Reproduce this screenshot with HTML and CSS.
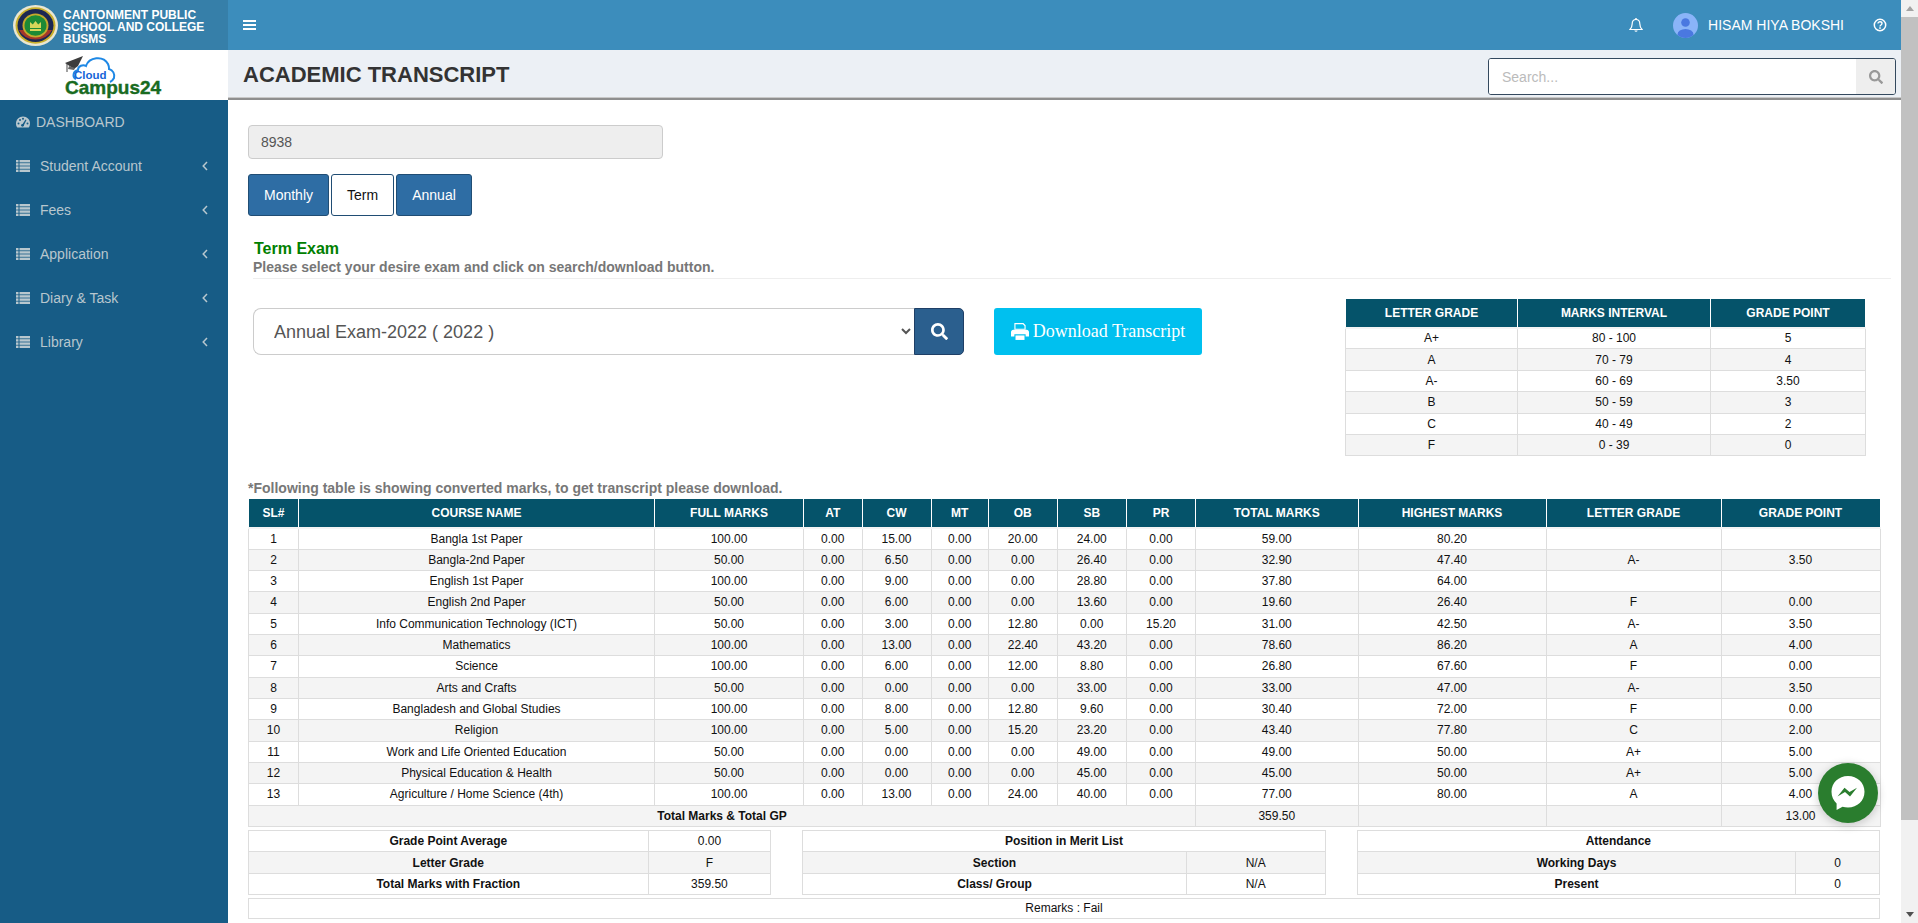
FILE: index.html
```html
<!DOCTYPE html>
<html lang="en">

<head>
    <meta charset="UTF-8">
    <meta name="viewport" content="width=device-width, initial-scale=1.0">
    <title>Academic Transcript</title>
    <link rel="stylesheet" href="styles.css">
</head>

<body>
    <svg class="defs" width="0" height="0">
        <symbol id="iconSearch" viewBox="0 0 512 512">
            <path d="M505 442.7L405.3 343c-4.5-4.5-10.6-7-17-7H372c27.6-35.3 44-79.7 44-128C416 93.1 322.9 0 208 0S0 93.1 0 208s93.1 208 208 208c48.3 0 92.7-16.4 128-44v16.3c0 6.4 2.5 12.5 7 17l99.7 99.7c9.4 9.4 24.6 9.4 33.9 0l28.3-28.3c9.4-9.4 9.4-24.6.1-34zM208 336c-70.7 0-128-57.2-128-128 0-70.7 57.2-128 128-128 70.7 0 128 57.2 128 128 0 70.7-57.2 128-128 128z" fill="currentColor" />
        </symbol>
        <symbol id="iconList" viewBox="0 0 14 12">
            <g fill="currentColor">
                <rect x="0" y="0" width="2.5" height="2.4" />
                <rect x="3.5" y="0" width="10.5" height="2.4" />
                <rect x="0" y="3.2" width="2.5" height="2.4" />
                <rect x="3.5" y="3.2" width="10.5" height="2.4" />
                <rect x="0" y="6.4" width="2.5" height="2.4" />
                <rect x="3.5" y="6.4" width="10.5" height="2.4" />
                <rect x="0" y="9.6" width="2.5" height="2.4" />
                <rect x="3.5" y="9.6" width="10.5" height="2.4" />
            </g>
        </symbol>
        <symbol id="iconAngle" viewBox="0 0 6 10">
            <path d="M5 1L1.2 5 5 9" fill="none" stroke="currentColor" stroke-width="1.5" />
        </symbol>
    </svg>

    <div class="page">
        <header class="topbar">
            <div class="schoolLogo">
                <svg class="crest" viewBox="0 0 45 41">
                    <ellipse cx="22.5" cy="20.5" rx="22.5" ry="20.5" fill="#e9e6d2" />
                    <ellipse cx="22.5" cy="20.5" rx="20" ry="18.2" fill="#c9b02c" />
                    <ellipse cx="22.5" cy="20.5" rx="18" ry="16.4" fill="#1c2752" />
                    <path d="M6 25a18 16 0 0 0 33 0z" fill="#a3362a" />
                    <ellipse cx="22.5" cy="20.5" rx="13" ry="12" fill="#c5a92c" />
                    <ellipse cx="22.5" cy="20.5" rx="11" ry="10.2" fill="#1d8a35" />
                    <path d="M17 23v-6l2.800 2.500 2.700-3.500 2.700 3.500 2.800-2.500v6z" fill="#d8d65a" />
                    <rect x="17" y="24" width="11" height="2" fill="#d8d65a" />
                </svg>
                <p class="schoolName">CANTONMENT PUBLIC<br>SCHOOL AND COLLEGE<br>BUSMS</p>
            </div>
            <div class="navbar">
                <div class="burger"><span></span><span></span><span></span></div>
                <div class="navRight">
                    <svg class="bell" viewBox="0 0 14 15">
                        <path d="M7 1.500c-2.600 0-3.800 2-3.800 4.300 0 2.800-1 4.300-2.200 5.700h12c-1.200-1.400-2.200-2.900-2.200-5.700C10.800 3.500 9.600 1.500 7 1.500z" fill="none" stroke="#fff" stroke-width="1.200" />
                        <path d="M5.300 12.500a1.800 1.800 0 0 0 3.400 0z" fill="#fff" />
                        <circle cx="7" cy="1" r="1" fill="#fff" />
                    </svg>
                    <svg class="avatar" viewBox="0 0 25 25">
                        <defs>
                            <clipPath id="avatarClip">
                                <circle cx="12.500" cy="12.500" r="12.500" />
                            </clipPath>
                        </defs>
                        <circle cx="12.500" cy="12.500" r="12.500" fill="#8ab4f8" />
                        <g clip-path="url(#avatarClip)" fill="#4a78e0">
                            <circle cx="12.500" cy="9.500" r="4.300" />
                            <ellipse cx="12.500" cy="21.500" rx="8" ry="5.500" />
                        </g>
                    </svg>
                    <span class="userName">HISAM HIYA BOKSHI</span>
                    <svg class="help" viewBox="0 0 14 14">
                        <circle cx="7" cy="7" r="5.700" fill="none" stroke="#fff" stroke-width="1.500" />
                        <path d="M5 5.600C5 4.400 6 3.800 7 3.800s2 .6 2 1.700c0 1.500-2 1.500-2 3" fill="none" stroke="#fff" stroke-width="1.400" />
                        <rect x="6.200" y="9.300" width="1.600" height="1.500" fill="#fff" />
                    </svg>
                </div>
            </div>
        </header>

        <div class="below">
            <aside class="sidebar">
                <div class="campusLogo">
                    <svg viewBox="0 0 110 48" width="110" height="48">
                        <path d="M16 27c-4-2-3-8 2-9 0-4 5-6 8-4 3-9 17-11 22-2 1 2 1 4 1 5 4 1 6 5 5 9-1 2-2 3-4 4" fill="none" stroke="#1e88e5" stroke-width="2" />
                        <path d="M5 11L23 4l-5 10-4 3z" fill="#3d3d3d" />
                        <path d="M9 14l6 2-1 2-6-1z" fill="#666" />
                        <path d="M7 12v8" stroke="#444" stroke-width="1" />
                        <text x="14" y="27" class="logoCloud">Cloud</text>
                        <text x="5" y="42" class="logoCampus">Campus24</text>
                    </svg>
                </div>
                <nav class="menu">
                    <a class="menuItem dash">
                        <svg class="menuIcon gauge" viewBox="0 0 14 12">
                            <path d="M7 .5C3.100.5 0 3.600 0 7.500c0 1.600.5 3 1.300 4h11.400c.8-1 1.300-2.400 1.300-4C14 3.600 10.900.5 7 .5z" fill="currentColor" />
                            <g fill="#175c86">
                                <circle cx="2.500" cy="7.500" r="1" />
                                <circle cx="4" cy="4" r="1" />
                                <circle cx="7" cy="2.700" r="1" />
                                <circle cx="11.500" cy="7.500" r="1" />
                                <circle cx="6.500" cy="9.300" r="1.400" />
                                <path d="M6 9l3.500-5.500 1 .5-3 6z" />
                            </g>
                        </svg>
                        <span>DASHBOARD</span>
                    </a>
                    <a class="menuItem">
                        <svg class="menuIcon"><use href="#iconList" /></svg>
                        <span class="menuLabel">Student Account</span>
                        <svg class="angle"><use href="#iconAngle" /></svg>
                    </a>
                    <a class="menuItem">
                        <svg class="menuIcon"><use href="#iconList" /></svg>
                        <span class="menuLabel">Fees</span>
                        <svg class="angle"><use href="#iconAngle" /></svg>
                    </a>
                    <a class="menuItem">
                        <svg class="menuIcon"><use href="#iconList" /></svg>
                        <span class="menuLabel">Application</span>
                        <svg class="angle"><use href="#iconAngle" /></svg>
                    </a>
                    <a class="menuItem">
                        <svg class="menuIcon"><use href="#iconList" /></svg>
                        <span class="menuLabel">Diary &amp; Task</span>
                        <svg class="angle"><use href="#iconAngle" /></svg>
                    </a>
                    <a class="menuItem">
                        <svg class="menuIcon"><use href="#iconList" /></svg>
                        <span class="menuLabel">Library</span>
                        <svg class="angle"><use href="#iconAngle" /></svg>
                    </a>
                </nav>
            </aside>

            <main class="main">
                <div class="titleBar">
                    <h1>ACADEMIC TRANSCRIPT</h1>
                    <div class="searchBox">
                        <input type="text" placeholder="Search...">
                        <button type="button"><svg class="searchIcon"><use href="#iconSearch" /></svg></button>
                    </div>
                </div>

                <div class="content">
                    <input class="studentId" type="text" value="8938" readonly>

                    <div class="tabs">
                        <button type="button" class="tab tabMonthly">Monthly</button>
                        <button type="button" class="tab tabTerm active">Term</button>
                        <button type="button" class="tab tabAnnual">Annual</button>
                    </div>

                    <div class="examHead">
                        <h3>Term Exam</h3>
                        <p>Please select your desire exam and click on search/download button.</p>
                    </div>

                    <div class="examRow">
                        <div class="examForm">
                            <select class="examSelect">
                                <option>Annual Exam-2022 ( 2022 )</option>
                            </select>
                            <button type="button" class="examSearch"><svg class="searchIcon"><use href="#iconSearch" /></svg></button>
                            <button type="button" class="download">
                                <svg class="printIcon" viewBox="0 0 16 15">
                                    <path d="M3 0h8l2 2v4H3zM4 1v4h8V2.500L10.500 1z" fill="#fff" fill-rule="evenodd" />
                                    <path d="M2 6h12c1 0 2 1 2 2v4h-3v-2H3v2H0V8c0-1 1-2 2-2z" fill="#fff" />
                                    <path d="M4 11h8v4H4z" fill="#fff" />
                                </svg>
                                Download Transcript
                            </button>
                        </div>
                        <table class="gradeTable">
                            <colgroup>
                                <col class="g1">
                                <col class="g2">
                                <col class="g3">
                            </colgroup>
                            <thead>
                                <tr><th>LETTER GRADE</th><th>MARKS INTERVAL</th><th>GRADE POINT</th></tr>
                            </thead>
                            <tbody>
                                <tr><td>A+</td><td>80 - 100</td><td>5</td></tr>
                                <tr><td>A</td><td>70 - 79</td><td>4</td></tr>
                                <tr><td>A-</td><td>60 - 69</td><td>3.50</td></tr>
                                <tr><td>B</td><td>50 - 59</td><td>3</td></tr>
                                <tr><td>C</td><td>40 - 49</td><td>2</td></tr>
                                <tr><td>F</td><td>0 - 39</td><td>0</td></tr>
                            </tbody>
                        </table>
                    </div>

                    <p class="note">*Following table is showing converted marks, to get transcript please download.</p>

                    <table class="markTable">
                        <colgroup>
                            <col class="m1">
                            <col class="m2">
                            <col class="m3">
                            <col class="m4">
                            <col class="m5">
                            <col class="m6">
                            <col class="m7">
                            <col class="m8">
                            <col class="m9">
                            <col class="m10">
                            <col class="m11">
                            <col class="m12">
                            <col class="m13">
                        </colgroup>
                        <thead>
                            <tr>
                                <th>SL#</th><th>COURSE NAME</th><th>FULL MARKS</th><th>AT</th><th>CW</th><th>MT</th><th>OB</th><th>SB</th><th>PR</th><th>TOTAL MARKS</th><th>HIGHEST MARKS</th><th>LETTER GRADE</th><th>GRADE POINT</th>
                            </tr>
                        </thead>
                        <tbody>
                            <tr><td>1</td><td>Bangla 1st Paper</td><td>100.00</td><td>0.00</td><td>15.00</td><td>0.00</td><td>20.00</td><td>24.00</td><td>0.00</td><td>59.00</td><td>80.20</td><td></td><td></td></tr>
                            <tr><td>2</td><td>Bangla-2nd Paper</td><td>50.00</td><td>0.00</td><td>6.50</td><td>0.00</td><td>0.00</td><td>26.40</td><td>0.00</td><td>32.90</td><td>47.40</td><td>A-</td><td>3.50</td></tr>
                            <tr><td>3</td><td>English 1st Paper</td><td>100.00</td><td>0.00</td><td>9.00</td><td>0.00</td><td>0.00</td><td>28.80</td><td>0.00</td><td>37.80</td><td>64.00</td><td></td><td></td></tr>
                            <tr><td>4</td><td>English 2nd Paper</td><td>50.00</td><td>0.00</td><td>6.00</td><td>0.00</td><td>0.00</td><td>13.60</td><td>0.00</td><td>19.60</td><td>26.40</td><td>F</td><td>0.00</td></tr>
                            <tr><td>5</td><td>Info Communication Technology (ICT)</td><td>50.00</td><td>0.00</td><td>3.00</td><td>0.00</td><td>12.80</td><td>0.00</td><td>15.20</td><td>31.00</td><td>42.50</td><td>A-</td><td>3.50</td></tr>
                            <tr><td>6</td><td>Mathematics</td><td>100.00</td><td>0.00</td><td>13.00</td><td>0.00</td><td>22.40</td><td>43.20</td><td>0.00</td><td>78.60</td><td>86.20</td><td>A</td><td>4.00</td></tr>
                            <tr><td>7</td><td>Science</td><td>100.00</td><td>0.00</td><td>6.00</td><td>0.00</td><td>12.00</td><td>8.80</td><td>0.00</td><td>26.80</td><td>67.60</td><td>F</td><td>0.00</td></tr>
                            <tr><td>8</td><td>Arts and Crafts</td><td>50.00</td><td>0.00</td><td>0.00</td><td>0.00</td><td>0.00</td><td>33.00</td><td>0.00</td><td>33.00</td><td>47.00</td><td>A-</td><td>3.50</td></tr>
                            <tr><td>9</td><td>Bangladesh and Global Studies</td><td>100.00</td><td>0.00</td><td>8.00</td><td>0.00</td><td>12.80</td><td>9.60</td><td>0.00</td><td>30.40</td><td>72.00</td><td>F</td><td>0.00</td></tr>
                            <tr><td>10</td><td>Religion</td><td>100.00</td><td>0.00</td><td>5.00</td><td>0.00</td><td>15.20</td><td>23.20</td><td>0.00</td><td>43.40</td><td>77.80</td><td>C</td><td>2.00</td></tr>
                            <tr><td>11</td><td>Work and Life Oriented Education</td><td>50.00</td><td>0.00</td><td>0.00</td><td>0.00</td><td>0.00</td><td>49.00</td><td>0.00</td><td>49.00</td><td>50.00</td><td>A+</td><td>5.00</td></tr>
                            <tr><td>12</td><td>Physical Education &amp; Health</td><td>50.00</td><td>0.00</td><td>0.00</td><td>0.00</td><td>0.00</td><td>45.00</td><td>0.00</td><td>45.00</td><td>50.00</td><td>A+</td><td>5.00</td></tr>
                            <tr><td>13</td><td>Agriculture / Home Science (4th)</td><td>100.00</td><td>0.00</td><td>13.00</td><td>0.00</td><td>24.00</td><td>40.00</td><td>0.00</td><td>77.00</td><td>80.00</td><td>A</td><td>4.00</td></tr>
                            <tr><td colspan="9" class="bold">Total Marks &amp; Total GP</td><td>359.50</td><td></td><td></td><td>13.00</td></tr>
                        </tbody>
                    </table>

                    <div class="summary">
                        <table class="sumTable">
                            <colgroup>
                                <col class="labelCol">
                                <col class="valueCol">
                            </colgroup>
                            <tr><td class="bold">Grade Point Average</td><td>0.00</td></tr>
                            <tr><td class="bold">Letter Grade</td><td>F</td></tr>
                            <tr><td class="bold">Total Marks with Fraction</td><td>359.50</td></tr>
                        </table>
                        <table class="sumTable">
                            <colgroup>
                                <col class="labelColMid">
                                <col class="valueColMid">
                            </colgroup>
                            <tr><td colspan="2" class="bold">Position in Merit List</td></tr>
                            <tr><td class="bold">Section</td><td>N/A</td></tr>
                            <tr><td class="bold">Class/ Group</td><td>N/A</td></tr>
                        </table>
                        <table class="sumTable">
                            <colgroup>
                                <col class="labelColEnd">
                                <col class="valueColEnd">
                            </colgroup>
                            <tr><td colspan="2" class="bold">Attendance</td></tr>
                            <tr><td class="bold">Working Days</td><td>0</td></tr>
                            <tr><td class="bold">Present</td><td>0</td></tr>
                        </table>
                    </div>

                    <div class="remarks">Remarks : Fail</div>
                </div>
            </main>
        </div>
    </div>

    <div class="scrollbar">
        <div class="arrowUp"></div>
        <div class="thumb"></div>
        <div class="arrowDown"></div>
    </div>

    <a class="chatBtn">
        <svg viewBox="0 0 36 36" width="36" height="36">
            <path d="M18 1C8.600 1 1.500 7.800 1.500 16.800c0 4.700 1.900 8.800 5.100 11.600v6.600l5.900-3.200c1.700.5 3.500.7 5.500.7 9.400 0 16.500-6.800 16.500-15.700C34.500 7.800 27.400 1 18 1z" fill="#fff" />
            <path d="M7.500 21.500l7-8.800 5 4.400 7.500-4.400-7 8.800-5-4.400z" fill="#2a7d2e" />
        </svg>
    </a>
</body>

</html>
```

FILE: styles.css
```css
* {
    margin: 0;
    padding: 0;
    box-sizing: border-box;
}

body {
    display: flex;
    height: 100vh;
    overflow: hidden;
    font-family: "Liberation Sans", Arial, sans-serif;
    font-size: 14px;
    color: #333;
    background-color: #fff;
}

.defs {
    position: absolute;
}

.page {
    flex: 1;
    display: flex;
    flex-direction: column;
    min-width: 0;
}

/* top bar */
.topbar {
    display: flex;
    height: 50px;
    flex-shrink: 0;
    background-color: #3c8dbc;
    color: #fff;
}

.schoolLogo {
    display: flex;
    align-items: center;
    width: 228px;
    padding-left: 13px;
    background-color: #367fa9;
}

.crest {
    width: 45px;
    height: 41px;
    flex-shrink: 0;
}

.schoolName {
    margin: 3px 0 0 5px;
    font-size: 12px;
    font-weight: bold;
    line-height: 12px;
    white-space: nowrap;
}

.navbar {
    flex: 1;
    display: flex;
    align-items: center;
    justify-content: space-between;
    padding: 0 14px 0 15px;
}

.burger {
    display: flex;
    flex-direction: column;
    gap: 2px;
    width: 13px;
}

.burger span {
    height: 2px;
    background-color: #fff;
}

.navRight {
    display: flex;
    align-items: center;
}

.bell {
    width: 14px;
    height: 15px;
    margin-right: 30px;
}

.avatar {
    width: 25px;
    height: 25px;
    margin-right: 10px;
}

.userName {
    font-size: 14px;
    margin-right: 29px;
}

.help {
    width: 14px;
    height: 14px;
}

/* sidebar */
.below {
    flex: 1;
    display: flex;
    min-height: 0;
}

.sidebar {
    width: 228px;
    flex-shrink: 0;
    background-color: #175c86;
}

.campusLogo {
    display: flex;
    height: 50px;
    background-color: #fff;
    padding: 2px 0 0 60px;
}

.logoCloud {
    font-family: "Liberation Sans", sans-serif;
    font-size: 11.5px;
    font-weight: bold;
    fill: #1565d8;
}

.logoCampus {
    font-family: "Liberation Sans", sans-serif;
    font-size: 19px;
    font-weight: bold;
    fill: #196b1f;
    stroke: #196b1f;
    stroke-width: .4px;
}

.menu {
    padding-top: 0;
}

.menuItem {
    display: flex;
    align-items: center;
    height: 44px;
    padding: 0 20px 0 16px;
    color: #b8c7ce;
    font-size: 14px;
}

.dash {
    font-size: 14px;
}

.menuIcon {
    width: 14px;
    height: 12px;
    flex-shrink: 0;
}

.gauge {
    margin-right: 6px;
}

.menuLabel {
    flex: 1;
    margin-left: 10px;
}

.angle {
    width: 6px;
    height: 10px;
}

/* title bar */
.main {
    flex: 1;
    min-width: 0;
}

.titleBar {
    display: flex;
    align-items: center;
    justify-content: space-between;
    height: 50px;
    padding: 2px 5px 0 15px;
    background-color: #ecf0f5;
    border-bottom: 2px solid #8f8f8f;
    box-shadow: inset 0 -1px 0 #c8c8c8;
}

.titleBar h1 {
    font-size: 22px;
    font-weight: bold;
    color: #333;
}

.searchBox {
    display: flex;
    width: 408px;
    height: 37px;
    margin-top: 3px;
    border: 1px solid #34495e;
    border-radius: 3px;
    background-color: #fff;
    overflow: hidden;
}

.searchBox input {
    flex: 1;
    min-width: 0;
    border: 0;
    outline: 0;
    padding: 0 13px;
    font-family: inherit;
    font-size: 14px;
}

.searchBox input::placeholder {
    color: #bbb;
}

.searchBox button {
    display: flex;
    align-items: center;
    justify-content: center;
    width: 39px;
    border: 0;
    background-color: #eee;
    color: #999;
}

.searchIcon {
    width: 14px;
    height: 14px;
}

/* content */
.content {
    padding: 25px 21px 0 20px;
}

.studentId {
    display: block;
    width: 415px;
    height: 34px;
    padding: 0 12px;
    border: 1px solid #ccc;
    border-radius: 4px;
    background-color: #eee;
    font-family: inherit;
    font-size: 14px;
    color: #555;
    outline: 0;
}

.tabs {
    display: flex;
    gap: 2px;
    margin-top: 15px;
}

.tab {
    height: 42px;
    border: 1px solid #204d74;
    border-radius: 3px;
    background-color: #2e6da4;
    font-family: inherit;
    font-size: 14px;
    color: #fff;
}

.tabMonthly {
    width: 81px;
}

.tabTerm {
    width: 63px;
}

.tabAnnual {
    width: 76px;
}

.tab.active {
    background-color: #fff;
    color: #111;
}

.examHead {
    margin: 24px -11px 0 5px;
    padding-bottom: 1px;
    border-bottom: 1px solid #eee;
}

.examHead h3 {
    padding-left: 1px;
    font-size: 16px;
    font-weight: bold;
    line-height: 18px;
    color: #008000;
}

.examHead p {
    font-size: 14px;
    font-weight: bold;
    line-height: 19px;
    color: #777;
}

.examRow {
    display: flex;
    justify-content: space-between;
    align-items: flex-start;
    margin-top: 19px;
    padding: 0 14px 0 5px;
}

.examForm {
    display: flex;
    align-items: center;
    margin-top: 10px;
}

.examSelect {
    width: 661px;
    height: 47px;
    padding: 0 16px;
    border: 1px solid #ccc;
    border-right: 0;
    border-radius: 8px 0 0 8px;
    background-color: #fff;
    font-family: inherit;
    font-size: 18px;
    color: #555;
    outline: 0;
}

.examSearch {
    display: flex;
    align-items: center;
    justify-content: center;
    width: 50px;
    height: 47px;
    border: 1px solid #1f3f66;
    border-radius: 0 5px 5px 0;
    background-color: #2b5f8e;
    color: #fff;
}

.examSearch .searchIcon {
    width: 17px;
    height: 17px;
}

.download {
    display: flex;
    align-items: center;
    justify-content: center;
    gap: 4px;
    width: 208px;
    height: 47px;
    margin-left: 30px;
    border: 0;
    border-radius: 3px;
    background-color: #00c0ef;
    font-family: "Liberation Serif", "Times New Roman", serif;
    font-size: 18px;
    color: #fff;
}

.printIcon {
    width: 18px;
    height: 17px;
}

/* grade table */
table {
    border-collapse: collapse;
    table-layout: fixed;
    font-size: 12px;
    color: #111;
    text-align: center;
}

td {
    height: 21.4px;
    padding: 0;
    border: 1px solid #ddd;
    vertical-align: middle;
}

th {
    padding: 0;
    border: 1px solid #fff;
    border-bottom: 2px solid #f4f4f4;
    background-color: #05536a;
    color: #fff;
    font-weight: bold;
    vertical-align: middle;
}

.gradeTable {
    width: 520px;
    flex-shrink: 0;
}

.gradeTable th {
    height: 29px;
}

.gradeTable tbody tr:nth-child(even),
.markTable tbody tr:nth-child(even),
.sumTable tr:nth-child(even) {
    background-color: #f4f4f4;
}

.g1 { width: 172px; }
.g2 { width: 193px; }
.g3 { width: 155px; }

.note {
    margin-top: 23px;
    font-size: 14px;
    font-weight: bold;
    line-height: 19px;
    color: #777;
}

/* marks table */
.markTable {
    width: 1632px;
}

.markTable th {
    height: 29px;
}

.markTable td {
    height: 21.33px;
}

.m1 { width: 50px; }
.m2 { width: 356px; }
.m3 { width: 149px; }
.m4 { width: 58.5px; }
.m5 { width: 69px; }
.m6 { width: 57.5px; }
.m7 { width: 68.5px; }
.m8 { width: 69.5px; }
.m9 { width: 69px; }
.m10 { width: 162.5px; }
.m11 { width: 188px; }
.m12 { width: 175px; }
.m13 { width: 159px; }

.bold {
    font-weight: bold;
}

.summary {
    display: grid;
    grid-template-columns: 1fr 1fr 1fr;
    column-gap: 31px;
    width: 1632px;
    margin-top: 3px;
}

.sumTable {
    width: 100%;
}

.labelCol { width: 76.5%; }
.valueCol { width: 23.5%; }
.labelColMid { width: 73.4%; }
.valueColMid { width: 26.6%; }
.labelColEnd { width: 84%; }
.valueColEnd { width: 16%; }

.remarks {
    width: 1632px;
    height: 21px;
    margin-top: 3px;
    border: 1px solid #ddd;
    font-size: 12px;
    line-height: 19px;
    text-align: center;
    color: #111;
}

/* fake page scrollbar */
.scrollbar {
    display: flex;
    flex-direction: column;
    width: 17px;
    flex-shrink: 0;
    background-color: #f1f1f1;
}

.arrowUp,
.arrowDown {
    width: 0;
    height: 0;
    margin: 6px auto 5px;
    border-left: 4px solid transparent;
    border-right: 4px solid transparent;
}

.arrowUp {
    border-bottom: 5px solid #a3a3a3;
}

.arrowDown {
    margin-top: auto;
    margin-bottom: 6px;
    border-top: 5px solid #505050;
}

.thumb {
    height: 803px;
    margin-top: 1px;
    background-color: #c1c1c1;
}

/* messenger button */
.chatBtn {
    position: absolute;
    left: 1818px;
    top: 763px;
    display: flex;
    align-items: center;
    justify-content: center;
    width: 60px;
    height: 60px;
    border-radius: 50%;
    background-color: #2a7d2e;
    box-shadow: 0 2px 10px rgba(0, 0, 0, .2);
}
```
